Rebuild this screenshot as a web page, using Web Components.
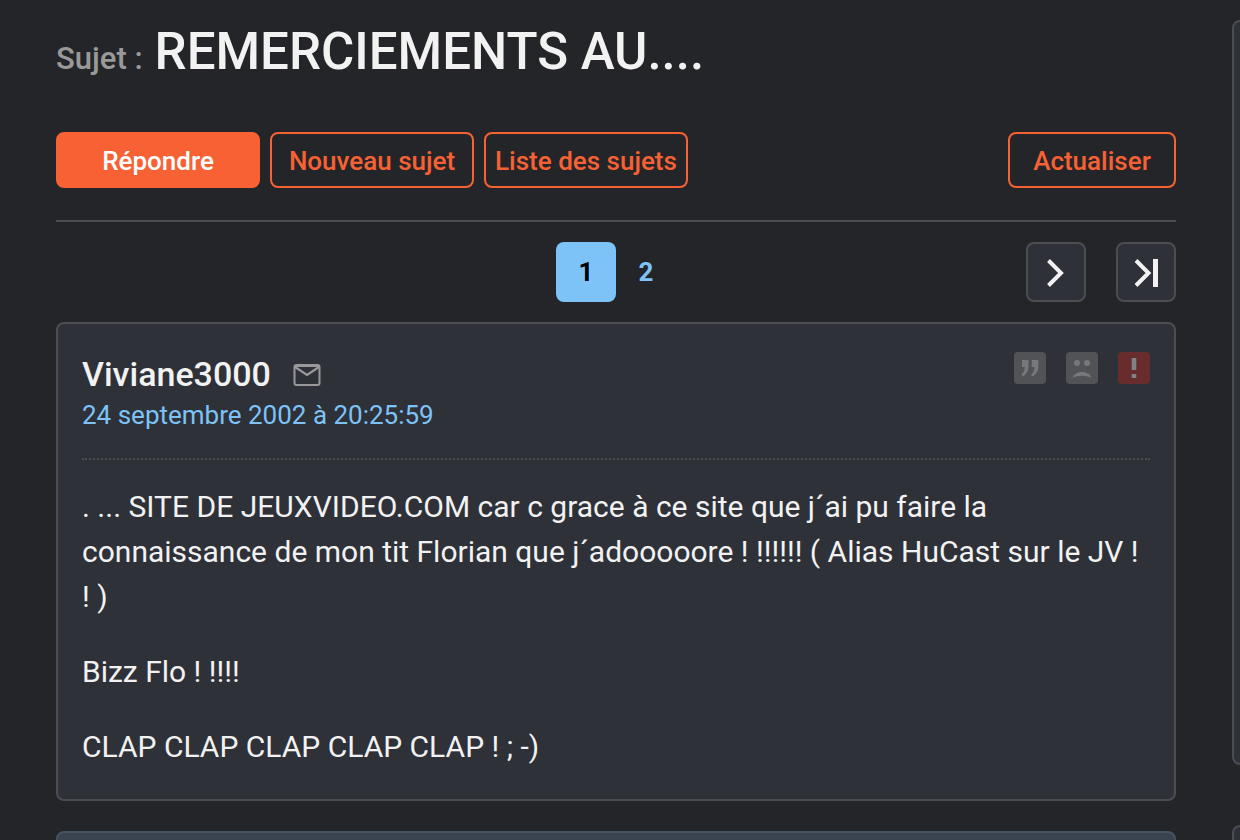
<!DOCTYPE html>
<html lang="fr">
<head>
<meta charset="utf-8">
<meta name="viewport" content="width=device-width, initial-scale=1">
<title>REMERCIEMENTS AU....</title>
<style>
  :root {
    --bg: #242529;
    --surface: #2e3138;
    --surface-alt: #3b4250;
    --line: #4c4d50;
    --line-alt: #465363;
    --text: #f2f2f2;
    --muted: #999999;
    --accent: #f86133;
    --link: #7dc3f7;
  }
  html { background: var(--bg); overflow: hidden; }
  body { margin: 0; font-family: Roboto, sans-serif; color: var(--text); }
</style>
</head>
<body>
<forum-page>
  <topic-title label="Sujet :">REMERCIEMENTS AU....</topic-title>
  <topic-toolbar>
    <action-button primary>Répondre</action-button>
    <action-button>Nouveau sujet</action-button>
    <action-button>Liste des sujets</action-button>
    <action-button slot="end" compact>Actualiser</action-button>
  </topic-toolbar>
  <page-nav></page-nav>
  <forum-post author="Viviane3000" date="24 septembre 2002 à 20:25:59">
    <p>. ... SITE DE JEUXVIDEO.COM car c grace à ce site que j´ai pu faire la connaissance de mon tit Florian que j´adooooore ! !!!!!! ( Alias HuCast sur le JV ! ! )</p>
    <p>Bizz Flo ! !!!!</p>
    <p>CLAP CLAP CLAP CLAP CLAP ! ; -)</p>
  </forum-post>
  <post-shell></post-shell>
  <side-panel slot="side" tall></side-panel>
  <side-panel slot="side"></side-panel>
</forum-page>

<script>
  const define = (name, html, setup) => {
    const template = document.createElement('template');
    template.innerHTML = html;
    customElements.define(name, class extends HTMLElement {
      constructor() {
        super();
        this.attachShadow({ mode: 'open' }).append(template.content.cloneNode(true));
      }
      connectedCallback() { if (setup) setup(this, this.shadowRoot); }
    });
  };

  define('forum-page', `
    <style>
      :host { display: grid; grid-template-columns: minmax(0, 1fr) 8px; height: 100vh; overflow: hidden; }
      main { padding: 20px 56px 0; }
      aside { display: flex; flex-direction: column; gap: 60px; padding-top: 20px; overflow: hidden; }
    </style>
    <main><slot></slot></main>
    <aside><slot name="side"></slot></aside>`);

  define('topic-title', `
    <style>
      :host { display: block; margin-bottom: 48px; }
      h1 { display: flex; align-items: baseline; gap: 12px; margin: 0; font-size: 51px; line-height: 64px; font-weight: 500; }
      .label { font-size: 31px; line-height: 40px; color: var(--muted); }
    </style>
    <h1><span class="label"></span><span><slot></slot></span></h1>`,
    (el, root) => { root.querySelector('.label').textContent = el.getAttribute('label'); });

  define('topic-toolbar', `
    <style>
      :host { display: flex; justify-content: space-between; padding-bottom: 32px; border-bottom: 2px solid var(--line); }
      div { display: flex; gap: 10px; }
    </style>
    <div><slot></slot></div>
    <div><slot name="end"></slot></div>`);

  define('action-button', `
    <style>
      :host { display: block; width: 204px; }
      :host([compact]) { width: 168px; }
      button { box-sizing: border-box; width: 100%; height: 56px; padding: 2px 0 0; border: 2px solid var(--accent); border-radius: 8px; background: transparent; color: var(--accent); font: 500 26px/40px Roboto, sans-serif; white-space: nowrap; cursor: pointer; }
      :host([primary]) button { background: var(--accent); color: #fff; }
    </style>
    <button type="button"><slot></slot></button>`);

  define('page-nav', `
    <style>
      :host { display: block; padding: 20px 0; }
      nav { display: grid; grid-template-columns: 1fr auto 1fr; }
      .pages { grid-column: 2; display: flex; }
      .jump { display: flex; justify-content: flex-end; gap: 30px; }
      a { box-sizing: border-box; display: flex; align-items: center; justify-content: center; width: 60px; height: 60px; border-radius: 8px; color: var(--link); font-size: 26px; font-weight: 700; text-decoration: none; }
      a[aria-current] { background: var(--link); color: #000; }
      .jump a { border: 2px solid var(--line); background: var(--surface); color: var(--text); }
      svg { width: 56px; height: 56px; fill: none; stroke: currentColor; }
    </style>
    <nav aria-label="Pages">
      <div class="pages"><a href="#1" aria-current="page">1</a><a href="#2">2</a></div>
      <div class="jump">
        <a href="#2" aria-label="Page suivante"><svg viewBox="0 0 56 56"><path d="M20.500 16.500L33 29L20.500 41.500" stroke-width="4"/></svg></a>
        <a href="#last" aria-label="Dernière page"><svg viewBox="0 0 56 56"><path d="M18 16.500L30.500 29L18 41.500" stroke-width="4"/><path d="M37.500 15V43" stroke-width="5"/></svg></a>
      </div>
    </nav>`);

  define('forum-post', `
    <style>
      :host { display: block; padding: 28px 24px 30px; border: 2px solid var(--line); border-radius: 8px; background: var(--surface); }
      header { display: flex; justify-content: space-between; align-items: flex-start; padding-bottom: 24px; border-bottom: 2px dotted var(--line); }
      .name { display: flex; align-items: center; gap: 22px; }
      h2 { margin: 0; font-size: 34px; line-height: 44px; font-weight: 500; }
      a { display: block; width: fit-content; color: var(--link); font-size: 26px; line-height: 38px; text-decoration: none; }
      button { display: block; padding: 0; border: 0; background: none; cursor: pointer; }
      svg { display: block; }
      .tools { display: flex; gap: 20px; }
      .body { padding-top: 24px; font-size: 30px; line-height: 45px; }
      ::slotted(p) { margin: 0 0 30px; }
      ::slotted(p:last-child) { margin: 0; }
    </style>
    <header>
      <div>
        <div class="name">
          <h2></h2>
          <button type="button" aria-label="Message privé"><svg width="28" height="24" viewBox="0 0 28 24" fill="none" stroke="#999" stroke-width="2"><rect x="1.500" y="3" width="25" height="20" rx="2"/><path d="M2 5L14 13L26 5M2 4H26" stroke-width="2.200"/></svg></button>
        </div>
        <a href="#post"></a>
      </div>
      <div class="tools">
        <button type="button" aria-label="Citer"><svg width="32" height="32" viewBox="0 0 32 32"><rect width="32" height="32" rx="4" fill="#525356"/><path d="M8 8H14.500V14.500Q14.500 21 8.500 24.500L7.500 22.500Q10.700 19.500 10.800 15H8ZM17.800 8H24.300V14.500Q24.300 21 18.300 24.500L17.300 22.500Q20.500 19.500 20.600 15H17.800Z" fill="#77787b"/></svg></button>
        <button type="button" aria-label="Blacklister"><svg width="32" height="32" viewBox="0 0 32 32"><rect width="32" height="32" rx="4" fill="#525356"/><g fill="#77787b"><circle cx="11" cy="11" r="3"/><circle cx="21" cy="11" r="3"/><path d="M6.500 25.500Q9 20 16 20Q23 20 25.500 25.500Q21 23.800 16 23.800Q11 23.800 6.500 25.500Z"/></g></svg></button>
        <button type="button" aria-label="Signaler"><svg width="32" height="32" viewBox="0 0 32 32"><rect width="32" height="32" rx="4" fill="#692c2d"/><path d="M13.700 6H18.300V18H13.700ZM13.700 22H18.300V26H13.700Z" fill="#808184"/></svg></button>
      </div>
    </header>
    <div class="body"><slot></slot></div>`,
    (el, root) => {
      root.querySelector('h2').textContent = el.getAttribute('author');
      root.querySelector('a').textContent = el.getAttribute('date');
    });

  define('post-shell', `
    <style>
      :host { display: block; height: 120px; margin-top: 30px; border: 2px solid var(--line-alt); border-radius: 8px; background: var(--surface-alt); }
    </style>`);

  define('side-panel', `
    <style>
      :host { box-sizing: border-box; display: block; flex: none; width: 600px; height: 300px; border: 2px solid var(--line); border-radius: 8px; background: var(--surface); }
      :host([tall]) { height: 745px; }
    </style>`);
</script>
</body>
</html>
